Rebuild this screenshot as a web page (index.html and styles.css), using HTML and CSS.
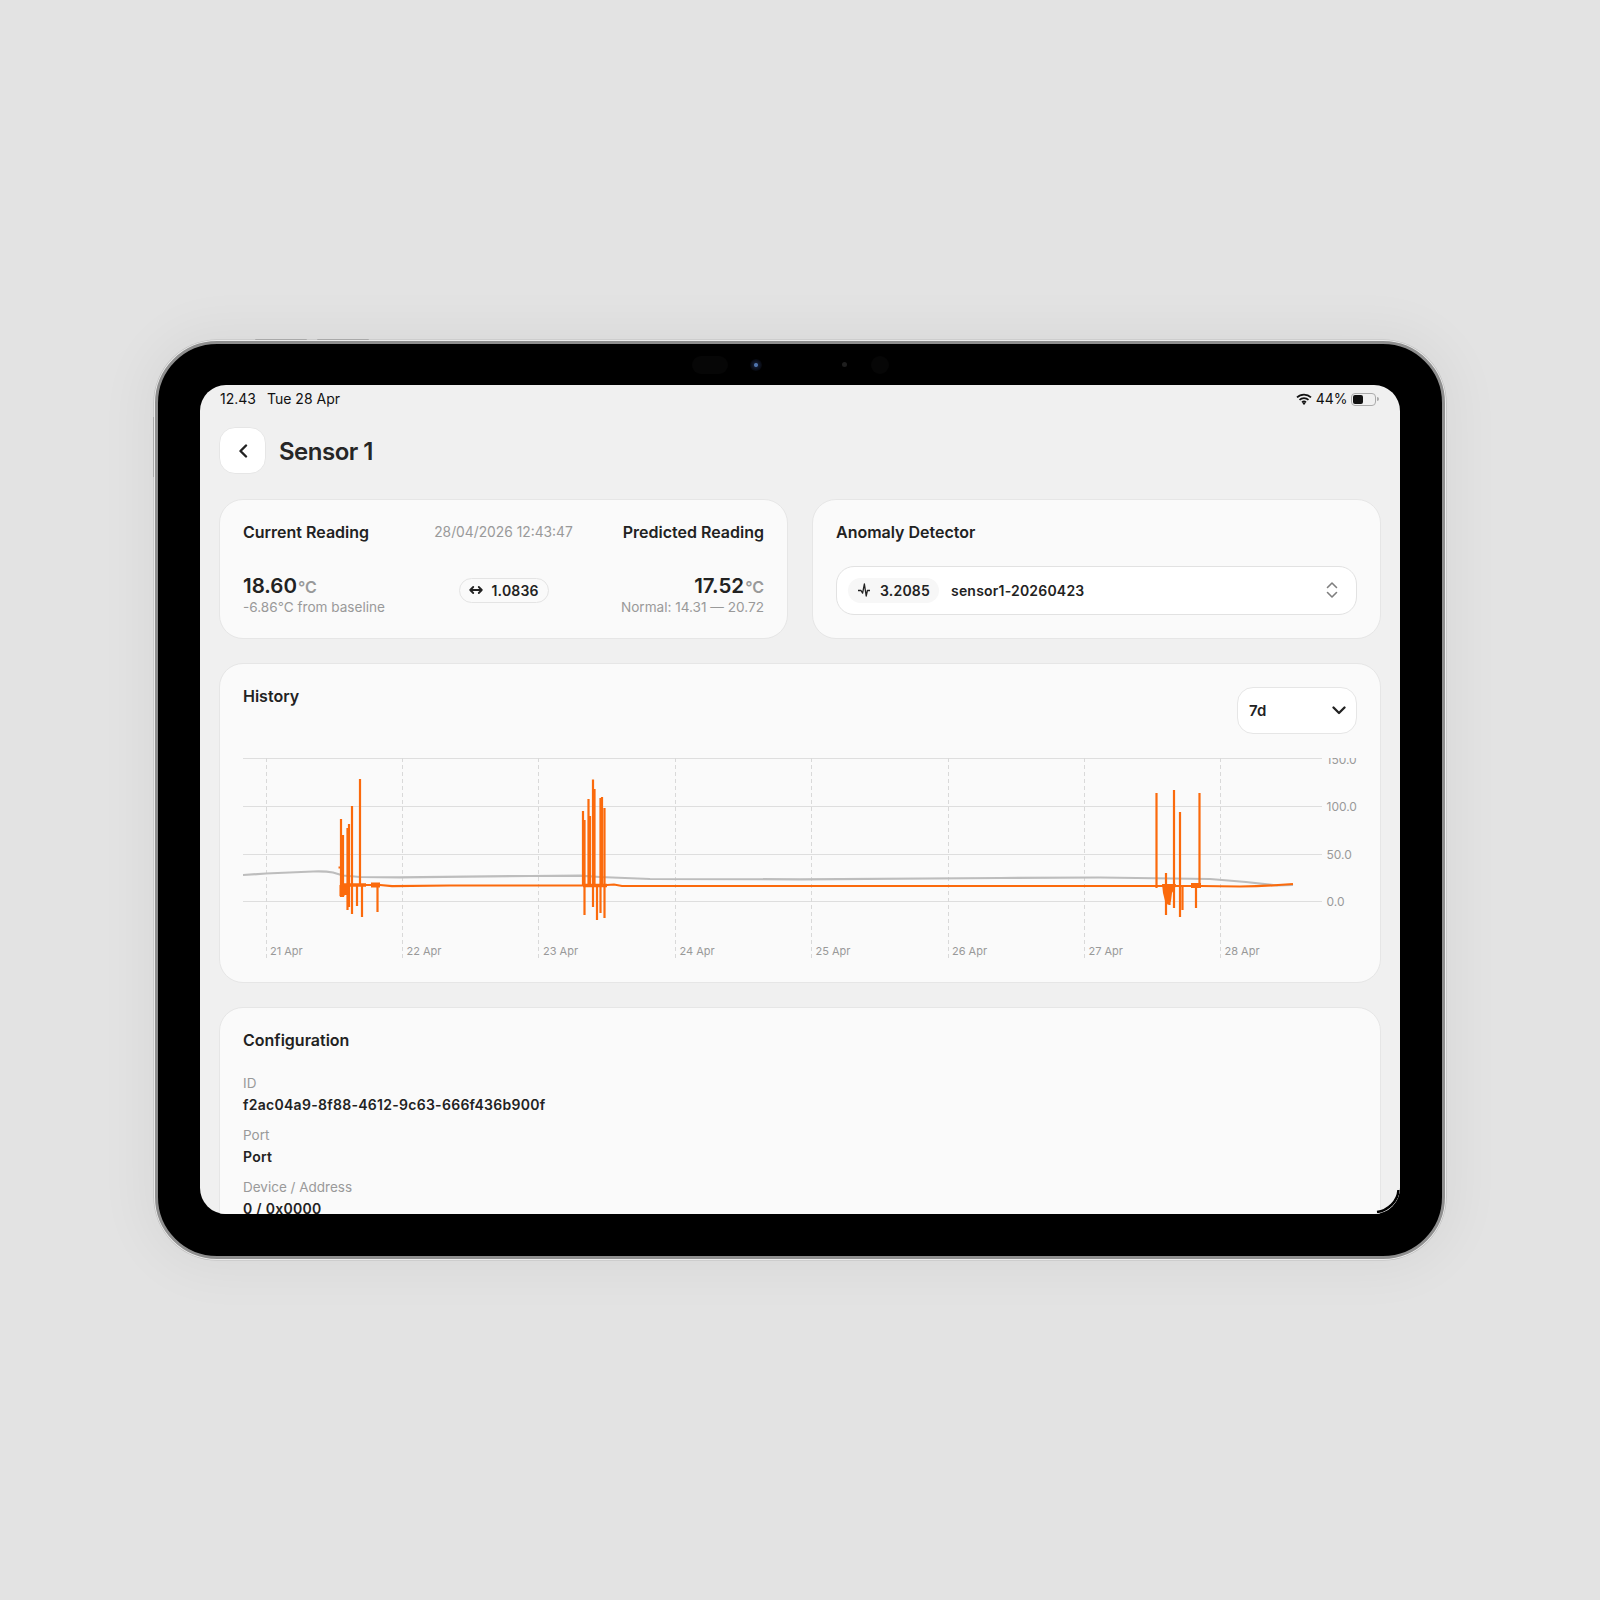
FILE: index.html
```html
<!DOCTYPE html>
<html lang="en">
<head>
<meta charset="utf-8">
<title>Sensor 1</title>
<link rel="stylesheet" href="styles.css">
</head>
<body>
<div class="device">
  <span class="btn-top btn-top-a"></span>
  <span class="btn-top btn-top-b"></span>
  <span class="btn-side"></span>
  <span class="sensor sensor-pill"></span>
  <span class="sensor sensor-cam"></span>
  <span class="sensor sensor-dot"></span>
  <span class="sensor sensor-round"></span>
  <div class="screen">
    <div class="status">
      <div class="status-left"><span>12.43</span><span>Tue 28 Apr</span></div>
      <div class="status-right">
        <svg class="wifi" viewBox="0 0 16 12" width="16" height="12"><path d="M1 4.4a10 10 0 0 1 14 0" /><path d="M3.5 6.9a6.5 6.5 0 0 1 9 0" /><path d="M6 9.3a3 3 0 0 1 4 0" /><circle cx="8" cy="10.4" r="1.2" /></svg>
        <span>44%</span>
        <span class="battery"><span class="battery-fill"></span></span>
      </div>
    </div>
    <div class="content">
      <header class="page-head">
        <button class="back" type="button" aria-label="Back">
          <svg viewBox="0 0 12 14" width="12" height="14"><path d="M9 1.5 3.5 7 9 12.5" /></svg>
        </button>
        <h1>Sensor 1</h1>
      </header>
      <div class="two-col">
        <section class="card">
          <div class="row-head">
            <h2>Current Reading</h2>
            <span class="muted date">28/04/2026 12:43:47</span>
            <h2 class="end">Predicted Reading</h2>
          </div>
          <div class="row-read">
            <div class="reading">
              <div class="value">18.60<span class="unit">°C</span></div>
              <div class="muted">-6.86°C from baseline</div>
            </div>
            <span class="pill pill-line">
              <svg class="ico-arrows" viewBox="0 0 14 10" width="14" height="10"><path d="M1.2 5h11.6M4.2 2 1.2 5l3 3M9.8 2l3 3-3 3" /></svg>
              1.0836
            </span>
            <div class="reading end">
              <div class="value">17.52<span class="unit">°C</span></div>
              <div class="muted">Normal: 14.31 — 20.72</div>
            </div>
          </div>
        </section>
        <section class="card">
          <h2>Anomaly Detector</h2>
          <div class="select">
            <span class="pill pill-soft">
              <svg class="ico-pulse" viewBox="0 0 14 14" width="14" height="14"><path d="M1 7.5h3l1.6 2.6L7.4 1l1.8 12 1.2-5.5H13" /></svg>
              3.2085
            </span>
            <span class="select-name">sensor1-20260423</span>
            <svg class="ico-updown" viewBox="0 0 12 18" width="12" height="18"><path d="M1.5 6.5 6 2l4.5 4.5M1.5 11.5 6 16l4.5-4.5" /></svg>
          </div>
        </section>
      </div>
      <section class="card">
        <div class="hist-head">
          <h2>History</h2>
          <div class="range">
            <span>7d</span>
            <svg viewBox="0 0 14 9" width="14" height="9"><path d="M1.5 1.5 7 7l5.5-5.5" /></svg>
          </div>
        </div>
        <svg class="chart" viewBox="243 758 1114 200" width="1114" height="200">
          <g class="grid-h">
            <path d="M243 758.5H1322" /><path d="M243 806.5H1322" /><path d="M243 854.5H1322" /><path d="M243 901.5H1322" />
          </g>
          <g class="grid-v">
            <path d="M266.5 758V958" /><path d="M402.5 758V958" /><path d="M538.5 758V958" /><path d="M675.5 758V958" /><path d="M811.5 758V958" /><path d="M948.5 758V958" /><path d="M1084.5 758V958" /><path d="M1220.5 758V958" />
          </g>
          <g class="axis-y">
            <text x="1326.5" y="763.5">150.0</text>
            <text x="1326.5" y="811">100.0</text>
            <text x="1326.5" y="859">50.0</text>
            <text x="1326.5" y="906">0.0</text>
          </g>
          <g class="axis-x">
            <text x="270" y="955">21 Apr</text>
            <text x="406.5" y="955">22 Apr</text>
            <text x="543" y="955">23 Apr</text>
            <text x="679.5" y="955">24 Apr</text>
            <text x="815.5" y="955">25 Apr</text>
            <text x="952" y="955">26 Apr</text>
            <text x="1088.5" y="955">27 Apr</text>
            <text x="1224.5" y="955">28 Apr</text>
          </g>
          <path class="line-base" d="M243 875 L266 873.5 L313 871.5 Q325 871 333 872.5 L343 875.5 L360 877 L400 877.3 L530 876 L580 875.7 L600 877 L650 879 L800 879.3 L1000 878 L1100 877.5 L1210 879 L1246 882 L1277 885.5 L1293 885" />
          <path class="line-main" d="M340 885H380L392 886.2 L450 885.5 H600 L614 884.5 L622 886 H1200 L1240 886.5 Q1270 886 1293 884" />
          <path class="line-main" d="M341 819V897M343 835V897M347.5 828V910M349 824V907M352 806V914M357 885V906M360 779V885M362 885V917M377.5 885V912M338.5 867.5H341" />
          <path class="line-block" d="M342 885V896M345 885V895" />
          <path class="line-thick" d="M342 885H366" />
          <path class="line-block" d="M371 885H380" />
          <path class="line-main" d="M583 811V885M584.5 820V915M588.5 799V885M590 816V885M593 779.5V907M594.5 789V885M597 885V920M600.5 798V913M602 797V885M604.5 808V918" />
          <path class="line-thick" d="M583 885.5H607" />
          <path class="line-main" d="M1156.5 793V888M1174 790V908M1180 812V917M1182.5 885V910M1199.5 793V887M1196 885V908M1169.5 885V905M1166 873V915" />
          <path class="fill-drop" d="M1162 884H1176L1175 888 1172 893 1171 901 1168 905 1165 901 1163 893Z" />
          <path class="line-block" d="M1191 885.5H1201" />
        </svg>
      </section>
      <section class="card">
        <h2>Configuration</h2>
        <dl class="config">
          <div class="config-row"><dt>ID</dt><dd>f2ac04a9-8f88-4612-9c63-666f436b900f</dd></div>
          <div class="config-row"><dt>Port</dt><dd>Port</dd></div>
          <div class="config-row"><dt>Device / Address</dt><dd>0 / 0x0000</dd></div>
        </dl>
      </section>
    </div>
    <svg class="corner" viewBox="0 0 24 24" width="24" height="24"><path d="M22.5 1C22 12 12 21.5 1 23" /></svg>
  </div>
</div>
</body>
</html>
```

FILE: styles.css
```css
* { box-sizing: border-box; }

html, body { margin: 0; padding: 0; }

body {
  width: 1600px;
  height: 1600px;
  background: #e3e3e3;
  display: flex;
  align-items: center;
  justify-content: center;
  font-family: Inter, "Liberation Sans", sans-serif;
  color: #222;
  overflow: hidden;
}

.device {
  position: relative;
  width: 1290px;
  height: 918px;
  padding: 41px 42px 42px;
  background: #000;
  border-radius: 62px;
  border: 3px solid #8f8f8f;
  box-shadow: 0 0 0 1px #ececec, 0 0 0 1.6px #bdbdbd, 0 0 50px 14px rgba(0, 0, 0, 0.045);
}

.btn-top {
  position: absolute;
  top: -5px;
  width: 52px;
  height: 1px;
  background: #a9a9a9;
  border-radius: 1px 1px 0 0;
}
.btn-top-a { left: 97px; }
.btn-top-b { left: 159px; }

.btn-side {
  position: absolute;
  left: -5px;
  top: 73px;
  width: 1px;
  height: 60px;
  background: #a9a9a9;
}

.sensor { position: absolute; display: block; }
.sensor-pill { left: 534px; top: 12px; width: 36px; height: 18px; border-radius: 9px; background: #060606; }
.sensor-cam { left: 592px; top: 15px; width: 12px; height: 12px; border-radius: 50%; background: radial-gradient(circle, #4f74ad 0 1.5px, #121a2e 2.5px, #05070d 6px); }
.sensor-dot { left: 684px; top: 18px; width: 5px; height: 5px; border-radius: 50%; background: #1e1e1e; }
.sensor-round { left: 713px; top: 12px; width: 18px; height: 18px; border-radius: 50%; background: #060606; }

.screen {
  position: relative;
  width: 1200px;
  height: 829px;
  background: #f0f0f0;
  border-radius: 26px;
  overflow: hidden;
}

.status {
  height: 28px;
  padding: 0 24px 0 20px;
  display: flex;
  align-items: center;
  justify-content: space-between;
  font-size: 14px;
  line-height: 28px;
  color: #111;
}
.status-left { display: flex; gap: 11px; }
.status-right { display: flex; align-items: center; gap: 4px; }

.wifi { fill: none; stroke: #111; stroke-width: 1.7; }
.wifi circle { fill: #111; stroke: none; }

.battery {
  display: block;
  position: relative;
  width: 25px;
  height: 13px;
  margin-left: -0.5px;
  border: 1.5px solid #ababab;
  border-radius: 4px;
  padding: 1px;
}
.battery::after {
  content: "";
  position: absolute;
  right: -3.5px;
  top: 3px;
  width: 1.5px;
  height: 4px;
  background: #ababab;
  border-radius: 0 2px 2px 0;
}
.battery-fill { display: block; width: 10px; height: 100%; background: #111; border-radius: 2px; }

.content {
  padding: 14px 19px 0;
  display: flex;
  flex-direction: column;
  gap: 24px;
}

.page-head { display: flex; align-items: center; gap: 13px; height: 47px; margin-bottom: 1px; }
h1 { margin: 2px 0 0; font-size: 24px; line-height: 30px; font-weight: 600; letter-spacing: -0.5px; color: #262626; }

.back {
  width: 47px;
  height: 47px;
  padding: 0;
  background: #fff;
  border: 1px solid #e6e6e6;
  border-radius: 16px;
  display: flex;
  align-items: center;
  justify-content: center;
}
.back svg { fill: none; stroke: #222; stroke-width: 2.4; stroke-linecap: round; stroke-linejoin: round; }

.two-col { display: grid; grid-template-columns: 569px 569px; gap: 24px; }

.card {
  background: #fafafa;
  border: 1px solid #e6e6e6;
  border-radius: 24px;
  padding: 23px;
}

h2 { margin: 0; font-size: 16px; line-height: 18px; font-weight: 600; color: #222; }

.muted { font-size: 13.6px; line-height: 16px; color: #999; }
.date { font-size: 13.8px; }
.end { text-align: right; }

.row-head { display: grid; grid-template-columns: 1fr auto 1fr; align-items: center; height: 18px; }

.row-read {
  margin-top: 25px;
  height: 48.5px;
  display: grid;
  grid-template-columns: 1fr auto 1fr;
  align-items: center;
}

.reading { align-self: end; }

.value { font-size: 20.5px; line-height: 23px; font-weight: 600; color: #222; }
.unit { font-size: 16px; color: #999; margin-left: 1px; }

.pill {
  display: inline-flex;
  align-items: center;
  height: 25px;
  border-radius: 13px;
  font-size: 14px;
  font-weight: 600;
  letter-spacing: 0.2px;
  color: #222;
}
.pill-line { padding: 0 9px; gap: 9px; border: 1px solid #e4e4e4; width: 90px; }
.pill-soft { padding: 0 9px; gap: 9px; background: #f7f7f7; width: 91px; }

.ico-arrows { fill: none; stroke: #222; stroke-width: 1.8; stroke-linecap: round; stroke-linejoin: round; flex: none; }
.ico-pulse { fill: none; stroke: #222; stroke-width: 1.3; stroke-linejoin: round; flex: none; }

.select {
  margin-top: 25px;
  height: 48.5px;
  padding: 0 12px 0 11px;
  background: #fff;
  border: 1px solid #e2e2e2;
  border-radius: 18px;
  display: flex;
  align-items: center;
  gap: 12px;
}
.select-name { flex: 1; font-size: 14px; font-weight: 600; letter-spacing: 0.2px; color: #222; }
.ico-updown { fill: none; stroke: #7f7f7f; stroke-width: 1.6; stroke-linecap: round; stroke-linejoin: round; margin-right: 6px; }

.hist-head { display: flex; justify-content: space-between; align-items: flex-start; height: 47px; margin-bottom: 24.5px; }

.range {
  width: 120px;
  height: 47px;
  padding: 0 10px 0 11px;
  background: #fff;
  border: 1px solid #e6e6e6;
  border-radius: 16px;
  display: flex;
  align-items: center;
  justify-content: space-between;
  font-size: 15px;
  font-weight: 600;
}
.range svg { fill: none; stroke: #222; stroke-width: 2.3; stroke-linecap: round; stroke-linejoin: round; }

.chart { display: block; margin-bottom: 0.5px; }
.grid-h path { stroke: #dedede; stroke-width: 1; fill: none; }
.grid-v path { stroke: #d9d9d9; stroke-width: 1; stroke-dasharray: 4 3; fill: none; }
.axis-y text { font-size: 12px; fill: #999; font-family: Inter, "Liberation Sans", sans-serif; }
.axis-x text { font-size: 11px; fill: #999; font-family: Inter, "Liberation Sans", sans-serif; }
.line-base { fill: none; stroke: #bdbdbd; stroke-width: 2.2; }
.line-main { fill: none; stroke: #fb6a0c; stroke-width: 2.2; }
.line-thick { fill: none; stroke: #fb6a0c; stroke-width: 3.5; }
.line-block { fill: none; stroke: #fb6a0c; stroke-width: 5; }
.fill-drop { fill: #fb6a0c; }

.config { margin: 24px 0 0; display: flex; flex-direction: column; gap: 9.5px; }
.config-row { display: flex; flex-direction: column; gap: 2.5px; }
dt { font-size: 13.5px; line-height: 20px; color: #999; }
dd { margin: 0; font-size: 14px; line-height: 20px; font-weight: 600; letter-spacing: 0.28px; color: #222; }

.corner {
  position: absolute;
  right: 0;
  bottom: 1px;
  fill: none;
  stroke: #000;
  stroke-width: 2.6;
}
```
